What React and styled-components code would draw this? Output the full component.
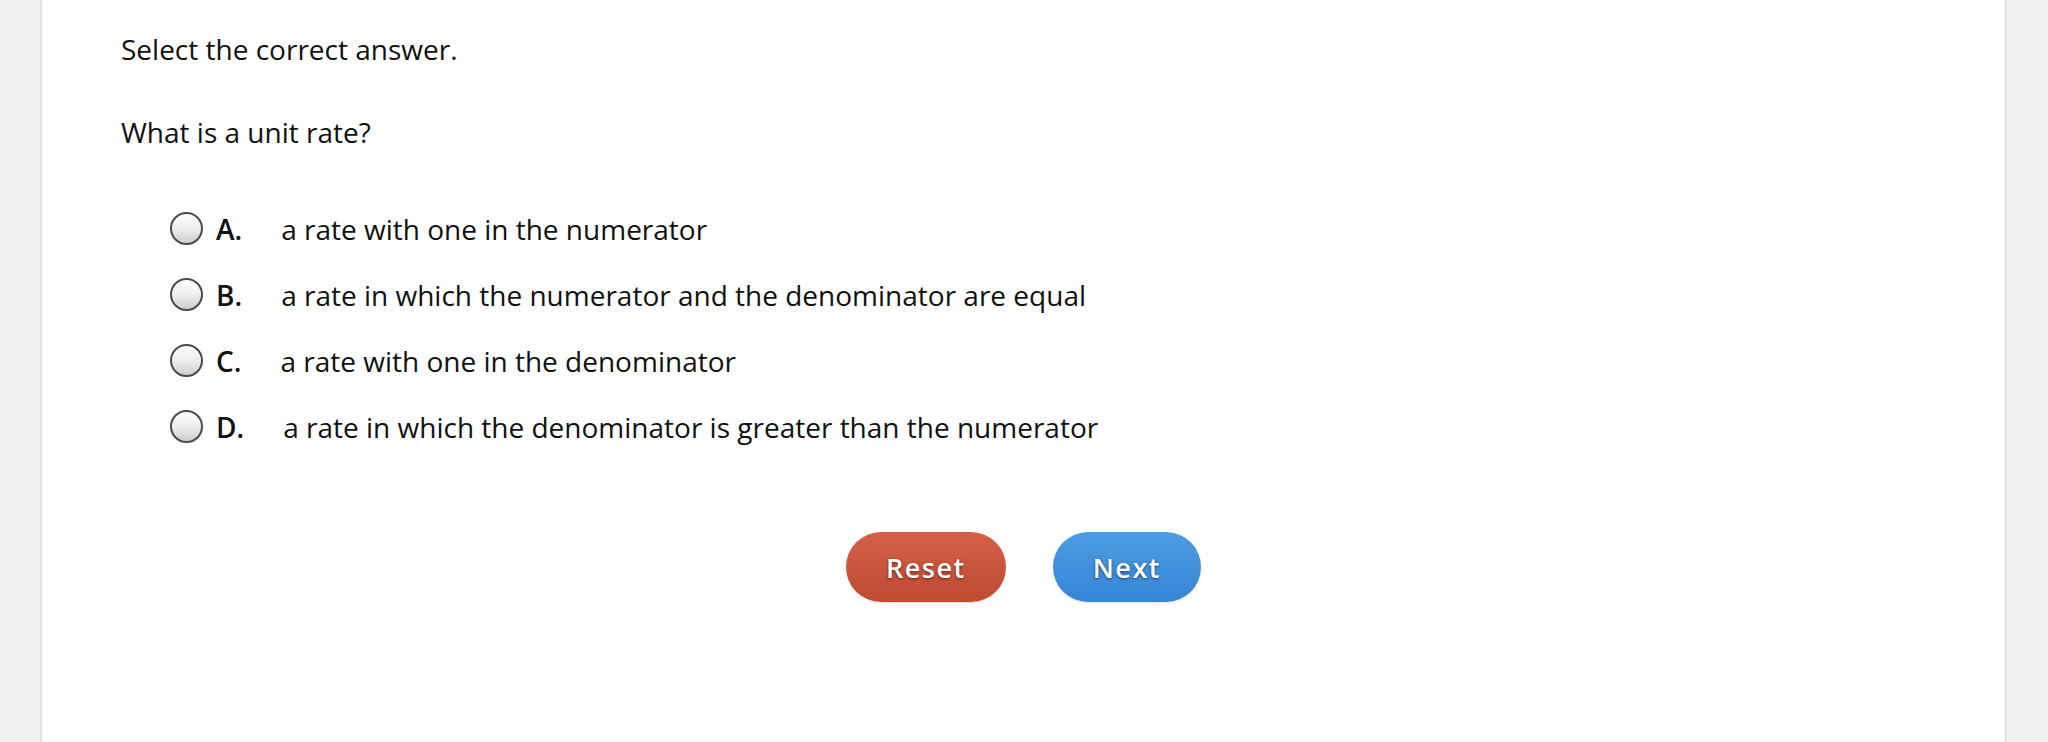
import React, { useState } from "react";
import styled, { createGlobalStyle } from "styled-components";

const GlobalStyle = createGlobalStyle`
  html, body {
    margin: 0;
    padding: 0;
    background: #f1f1f1;
    font-family: "Open Sans", "Liberation Sans", sans-serif;
    color: #111;
  }
`;

const Page = styled.div`
  padding: 0 41px 0 40px;
  min-height: 742px;
  box-sizing: border-box;
`;

const Card = styled.div`
  background: #fff;
  min-height: 742px;
  box-sizing: border-box;
  border-left: 2px solid #e4e4e4;
  border-right: 2px solid #e4e4e4;
  box-shadow: inset 1px 0 0 #f4f4f4, inset -1px 0 0 #f4f4f4;
  padding: 30px 79px 0 79px;
`;

const Prompt = styled.p`
  margin: 0;
  font-size: 28px;
  line-height: 38px;
`;

const Question = styled(Prompt)`
  margin-top: 45px;
`;

const Options = styled.div`
  display: flex;
  flex-direction: column;
  gap: 28px;
  margin-top: 59px;
  padding-left: 49px;
`;

const Option = styled.label`
  display: flex;
  align-items: center;
  font-size: 28px;
  line-height: 38px;
  cursor: pointer;
`;

const Radio = styled.span`
  flex: none;
  width: 29px;
  height: 29px;
  border-radius: 50%;
  border: 2px solid ${(p) => (p.$checked ? "#2d7cd1" : "#4a4a4a")};
  background: linear-gradient(#ffffff 0%, #f0f0f0 45%, #cfcfcf 100%);
  box-shadow: inset 0 1px 1px rgba(255, 255, 255, 0.9);
  margin-right: 13px;
  margin-top: -2px;
`;

const Letter = styled.span`
  font-weight: 600;
  margin-right: 39px;
`;

const Buttons = styled.div`
  display: flex;
  justify-content: center;
  gap: 47px;
  margin-top: 86px;
`;

const PillButton = styled.button`
  height: 70px;
  padding: 0 40px;
  border: none;
  border-radius: 35px;
  font-family: "Open Sans", "Liberation Sans", sans-serif;
  font-size: 27px;
  font-weight: 600;
  letter-spacing: 1.5px;
  color: #fff;
  text-shadow: 0 1px 3px rgba(0, 0, 0, 0.55);
  box-shadow: 0 1px 2px rgba(0, 0, 0, 0.12);
  cursor: pointer;
  background: ${(p) =>
    p.$variant === "reset"
      ? "linear-gradient(#d65f48, #bf4a30)"
      : "linear-gradient(#4c9de2, #3585d7)"};
`;

const choices = [
  { key: "A", text: "a rate with one in the numerator" },
  { key: "B", text: "a rate in which the numerator and the denominator are equal" },
  { key: "C", text: "a rate with one in the denominator" },
  { key: "D", text: "a rate in which the denominator is greater than the numerator" },
];

export default function App() {
  const [selected, setSelected] = useState(null);

  return (
    <>
      <GlobalStyle />
      <Page>
        <Card>
          <Prompt>Select the correct answer.</Prompt>
          <Question>What is a unit rate?</Question>
          <Options>
            {choices.map((c) => (
              <Option key={c.key} onClick={() => setSelected(c.key)}>
                <Radio $checked={selected === c.key} />
                <Letter>{c.key}.</Letter>
                <span>{c.text}</span>
              </Option>
            ))}
          </Options>
          <Buttons>
            <PillButton $variant="reset" onClick={() => setSelected(null)}>
              Reset
            </PillButton>
            <PillButton $variant="next">Next</PillButton>
          </Buttons>
        </Card>
      </Page>
    </>
  );
}
